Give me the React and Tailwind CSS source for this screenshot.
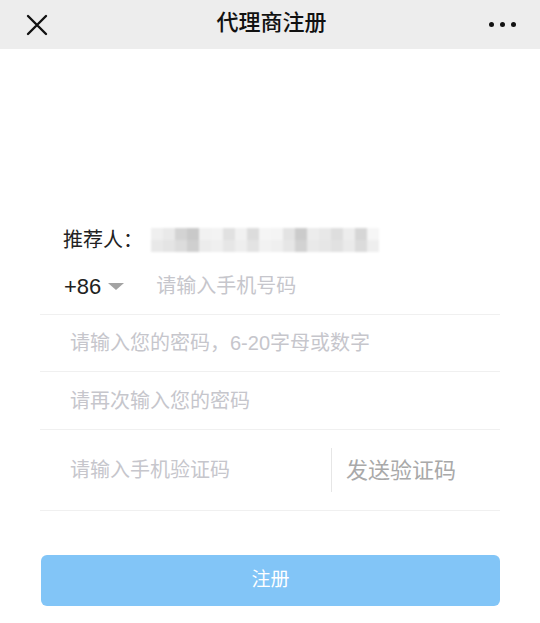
import { useState } from "react";

/* mosaic cells for the blurred referrer name */
const MOSAIC = [
  ["#efefef", "#e9e9e9", "#d3d3d3", "#c9c9c9", "#f1f1f1", "#f3f3f3", "#e1e1e1", "#f1f1f1", "#dcdcdc", "#f5f5f5", "#f4f4f4", "#e3e3e3", "#cbcbcb", "#ececec", "#e8e8e8", "#dedede", "#ededed", "#d6d6d6", "#f6f6f6"],
  ["#e8e8e8", "#e4e4e4", "#dcdcdc", "#cfcfcf", "#ececec", "#efefef", "#e6e6e6", "#eeeeee", "#e3e3e3", "#f2f2f2", "#efefef", "#e6e6e6", "#d2d2d2", "#e9e9e9", "#e6e6e6", "#e1e1e1", "#eaeaea", "#dbdbdb", "#eeeeee"],
];

export default function App() {
  const [phone, setPhone] = useState("");
  const [pwd, setPwd] = useState("");
  const [pwd2, setPwd2] = useState("");
  const [code, setCode] = useState("");

  return (
    <div
      className="w-[540px] h-[623px] bg-white overflow-hidden"
      style={{ fontFamily: '"Liberation Sans", "Noto Sans CJK SC", sans-serif' }}
    >
      {/* HEADER */}
      <div className="h-[49px] bg-[#ededed] flex items-center justify-between px-[26px]">
        <svg width="22" height="22" viewBox="0 0 22 22">
          <path d="M2 2 L20 20 M20 2 L2 20" stroke="#111" strokeWidth="2.4" strokeLinecap="round" />
        </svg>
        <h1 className="text-[22px] font-medium text-[#111] ml-[6px] mt-[-4px]">代理商注册</h1>
        <div className="flex gap-[6px] mr-[-2px]">
          <span className="w-[5px] h-[5px] rounded-full bg-[#111]" />
          <span className="w-[5px] h-[5px] rounded-full bg-[#111]" />
          <span className="w-[5px] h-[5px] rounded-full bg-[#111]" />
        </div>
      </div>

      {/* FORM */}
      <div className="px-[40px]">
        <div className="mt-[177px] h-[28px] flex items-center pl-[23px]">
          <span className="text-[20px] text-[#222]">推荐人：</span>
          <div className="ml-[8px] blur-[1px]">
            {MOSAIC.map((row, i) => (
              <div key={i} className="flex">
                {row.map((c, j) => (
                  <span key={j} className="w-[12px] h-[12px]" style={{ background: c }} />
                ))}
              </div>
            ))}
          </div>
        </div>

        <div className="mt-[4px] h-[57px] flex items-center border-b border-[#f0f0f0] pl-[24px]">
          <span className="text-[22px] text-[#222]">+86</span>
          <span className="ml-[7px] mt-[1px] w-0 h-0 border-l-[8px] border-r-[8px] border-t-[7px] border-l-transparent border-r-transparent border-t-[#a3a3a3]" />
          <input
            value={phone}
            onChange={(e) => setPhone(e.target.value)}
            placeholder="请输入手机号码"
            className="ml-[32px] flex-1 outline-none text-[20px] text-[#222] placeholder:text-[#c6c6cc] bg-transparent"
          />
        </div>

        <div className="h-[57px] flex items-center border-b border-[#f0f0f0] pl-[30px]">
          <input
            type="password"
            value={pwd}
            onChange={(e) => setPwd(e.target.value)}
            placeholder="请输入您的密码，6-20字母或数字"
            className="flex-1 outline-none text-[20px] text-[#222] placeholder:text-[#c6c6cc] bg-transparent"
          />
        </div>

        <div className="h-[58px] flex items-center border-b border-[#f0f0f0] pl-[30px]">
          <input
            type="password"
            value={pwd2}
            onChange={(e) => setPwd2(e.target.value)}
            placeholder="请再次输入您的密码"
            className="flex-1 outline-none text-[20px] text-[#222] placeholder:text-[#c6c6cc] bg-transparent"
          />
        </div>

        <div className="h-[81px] flex items-center border-b border-[#f0f0f0] pl-[30px]">
          <input
            value={code}
            onChange={(e) => setCode(e.target.value)}
            placeholder="请输入手机验证码"
            className="w-[260px] outline-none text-[20px] text-[#222] placeholder:text-[#c6c6cc] bg-transparent"
          />
          <div className="ml-[1px] w-px h-[44px] bg-[#e6e6e6]" />
          <button className="ml-[14px] text-[22px] text-[#a9a9a9]">发送验证码</button>
        </div>

        <button className="mt-[44px] ml-[1px] w-[459px] h-[51px] rounded-[6px] bg-[#82c5f7] text-white text-[19px]">
          注册
        </button>
      </div>
    </div>
  );
}
